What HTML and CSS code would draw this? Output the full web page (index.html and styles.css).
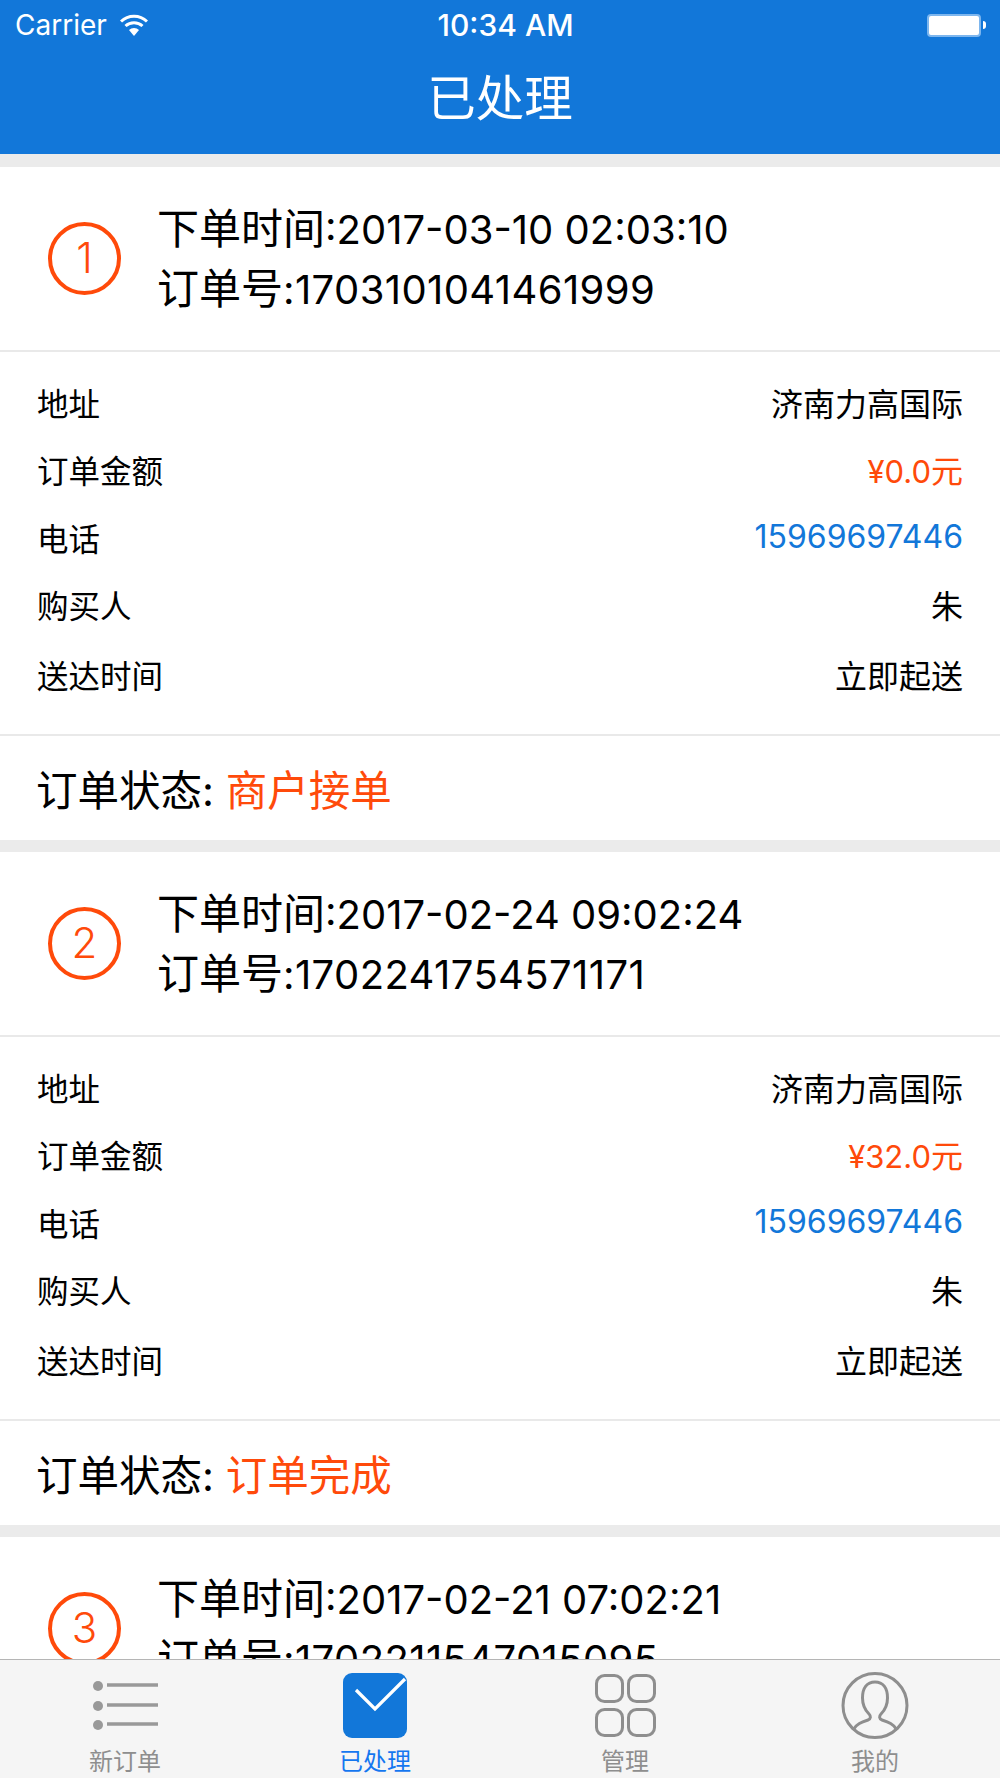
FILE: index.html

```html
<!DOCTYPE html>
<html lang="zh-CN">
<head>
  <meta charset="UTF-8" />
  <meta name="viewport" content="width=device-width, initial-scale=1.0" />
  <title>已处理</title>
  <link rel="stylesheet" href="styles.css">
</head>
<body>
  <div class="app">
    <header class="top">
      <div class="status-bar">
        <div class="status-left">
          <span>Carrier</span>
          <svg class="wifi" width="28" height="22" viewBox="0 0 28 22">
            <path d="M1 7.5 A18.5 18.5 0 0 1 27 7.5" fill="none" stroke="#fff" stroke-width="3"/>
            <path d="M5.5 12 A12.5 12.5 0 0 1 22.5 12" fill="none" stroke="#fff" stroke-width="3"/>
            <path d="M9 16 L14 22 L19 16 A7 7 0 0 0 9 16 Z" fill="#fff"/>
          </svg>
        </div>
        <div class="status-time">10:34 AM</div>
        <div class="status-right">
          <div class="battery"></div>
          <div class="battery-nub"></div>
        </div>
      </div>
      <h1 class="title">已处理</h1>
    </header>

    <main class="list">
      <section class="order">
        <div class="order-head">
          <div class="order-num">1</div>
          <div class="order-info">
            <div>下单时间<span class="num">:2017-03-10 02:03:10</span></div>
            <div class="order-no">订单号<span class="num">:1703101041461999</span></div>
          </div>
        </div>
        <div class="order-rows">
          <div class="row"><span class="label">地址</span><span>济南力高国际</span></div>
          <div class="row"><span class="label">订单金额</span><span class="orange"><span class="num">¥0.0</span>元</span></div>
          <div class="row"><span class="label">电话</span><span class="blue num">15969697446</span></div>
          <div class="row"><span class="label">购买人</span><span>朱</span></div>
          <div class="row"><span class="label">送达时间</span><span>立即起送</span></div>
        </div>
        <div class="order-status">订单状态<span class="num">: </span><span class="orange">商户接单</span></div>
      </section>

      <section class="order">
        <div class="order-head">
          <div class="order-num">2</div>
          <div class="order-info">
            <div>下单时间<span class="num">:2017-02-24 09:02:24</span></div>
            <div class="order-no">订单号<span class="num">:1702241754571171</span></div>
          </div>
        </div>
        <div class="order-rows">
          <div class="row"><span class="label">地址</span><span>济南力高国际</span></div>
          <div class="row"><span class="label">订单金额</span><span class="orange"><span class="num">¥32.0</span>元</span></div>
          <div class="row"><span class="label">电话</span><span class="blue num">15969697446</span></div>
          <div class="row"><span class="label">购买人</span><span>朱</span></div>
          <div class="row"><span class="label">送达时间</span><span>立即起送</span></div>
        </div>
        <div class="order-status">订单状态<span class="num">: </span><span class="orange">订单完成</span></div>
      </section>

      <section class="order">
        <div class="order-head">
          <div class="order-num">3</div>
          <div class="order-info">
            <div>下单时间<span class="num">:2017-02-21 07:02:21</span></div>
            <div class="order-no">订单号<span class="num">:1702211547015095</span></div>
          </div>
        </div>
      </section>
    </main>

    <nav class="tabs">
      <div class="tab">
        <svg class="tab-icon" width="70" height="70" viewBox="0 0 70 70">
          <circle cx="8" cy="16" r="5" fill="#999"/>
          <circle cx="8" cy="36" r="5" fill="#999"/>
          <circle cx="8" cy="55" r="5" fill="#999"/>
          <path d="M17 15 H68 M17 35 H68 M17 54 H68" stroke="#999" stroke-width="3.5"/>
        </svg>
        <span>新订单</span>
      </div>
      <div class="tab active">
        <svg class="tab-icon" width="70" height="70" viewBox="0 0 70 70">
          <rect x="3" y="3" width="64" height="65" rx="9" fill="#1277d9"/>
          <path d="M16 20 L35 39 L65 9" fill="none" stroke="#fff" stroke-width="3.2"/>
        </svg>
        <span>已处理</span>
      </div>
      <div class="tab">
        <svg class="tab-icon" width="70" height="70" viewBox="0 0 70 70">
          <g fill="none" stroke="#8e8e8e" stroke-width="3">
            <rect x="6.5" y="5.5" width="26" height="26" rx="8"/>
            <rect x="38.5" y="5.5" width="26" height="26" rx="8"/>
            <rect x="6.5" y="39.5" width="26" height="26" rx="8"/>
            <rect x="38.5" y="39.5" width="26" height="26" rx="8"/>
          </g>
        </svg>
        <span>管理</span>
      </div>
      <div class="tab">
        <svg class="tab-icon" width="70" height="70" viewBox="0 0 70 70">
          <g fill="none" stroke="#8e8e8e" stroke-width="3">
            <circle cx="35" cy="35.5" r="32"/>
            <path d="M13 60 C16 54 22 52 28 50 C31 49 31 46 29 44 C25 40 22.5 34 22.5 28 C22.5 18 27 12 35 12 C43 12 47.5 18 47.5 28 C47.5 34 45 40 41 44 C39 46 39 49 42 50 C48 52 54 54 57 60"/>
          </g>
        </svg>
        <span>我的</span>
      </div>
    </nav>
  </div>
</body>
</html>
```

FILE: styles.css

```css
body {
  margin: 0;
  padding: 0;
  background: #ebebeb;
  font-family: 'Liberation Sans', 'Noto Sans CJK SC', sans-serif;
  color: #000;
}
.app {
  display: flex;
  flex-direction: column;
  height: 1778px;
  overflow: hidden;
}
.top {
  flex: none;
  height: 154px;
  background-color: #1277d9;
  color: white;
}
.status-bar {
  display: grid;
  grid-template-columns: 1fr auto 1fr;
  align-items: center;
  height: 50px;
  padding: 0 14px 0 15px;
  font-family: Inter, 'Liberation Sans', sans-serif;
  font-size: 28px;
}
.status-left {
  display: flex;
  align-items: center;
  gap: 13px;
}
.status-time {
  font-size: 30px;
  font-weight: 500;
  padding-left: 10px;
}
.status-right {
  display: flex;
  align-items: center;
  justify-content: flex-end;
  gap: 2px;
}
.battery {
  box-sizing: border-box;
  width: 54px;
  height: 23px;
  background: white;
  border: 2px solid #7db6ee;
  border-radius: 4px;
}
.battery-nub {
  width: 3px;
  height: 8px;
  background: white;
  border-radius: 0 4px 4px 0;
}
.title {
  margin: 0;
  text-align: center;
  font-size: 48.5px;
  font-weight: normal;
  line-height: 98px;
}
.list {
  flex: 1;
  min-height: 0;
  overflow: hidden;
  padding-top: 13px;
}
.order {
  background: white;
  margin-bottom: 12px;
}
.order-head {
  display: flex;
  align-items: center;
  gap: 36px;
  height: 183px;
  padding-left: 48px;
  border-bottom: 2px solid #e9e9e9;
}
.order-num {
  box-sizing: border-box;
  width: 73px;
  height: 73px;
  border: 4.5px solid #ff4a0a;
  border-radius: 50%;
  color: #ff4a0a;
  font-family: Inter, sans-serif;
  font-weight: 300;
  font-size: 42px;
  line-height: 64px;
  text-align: center;
}
.order-info {
  padding-top: 2px;
  font-size: 42px;
  line-height: 60px;
}
.order-info .num {
  font-size: 40px;
}
.order-no .num {
  letter-spacing: 0.4px;
}
.num {
  font-family: Inter, 'Liberation Sans', sans-serif;
}
.order-rows {
  padding: 16px 37px 26.5px;
  border-bottom: 2px solid #e9e9e9;
}
.row {
  display: flex;
  justify-content: space-between;
  align-items: center;
  height: 67.5px;
  font-size: 32px;
}
.row:last-child {
  margin-top: 2px;
}
.row .orange .num {
  font-size: 31px;
}
.label {
  font-size: 31.5px;
}
.order-status {
  height: 104px;
  padding-left: 36px;
  font-size: 41.5px;
  line-height: 110px;
}
.orange {
  color: #ff4a0a;
}
.blue {
  color: #1277d9;
}
.tabs {
  flex: none;
  display: grid;
  grid-template-columns: repeat(4, 1fr);
  height: 118px;
  background: #f5f5f5;
  border-top: 1px solid #b5b5b5;
}
.tab {
  display: flex;
  flex-direction: column;
  align-items: center;
  padding-top: 10px;
  color: #8e8e8e;
  font-size: 24px;
  line-height: 30px;
}
.tab-icon {
  display: block;
  margin-bottom: 7px;
}
.tab.active {
  color: #1577f0;
}
```
